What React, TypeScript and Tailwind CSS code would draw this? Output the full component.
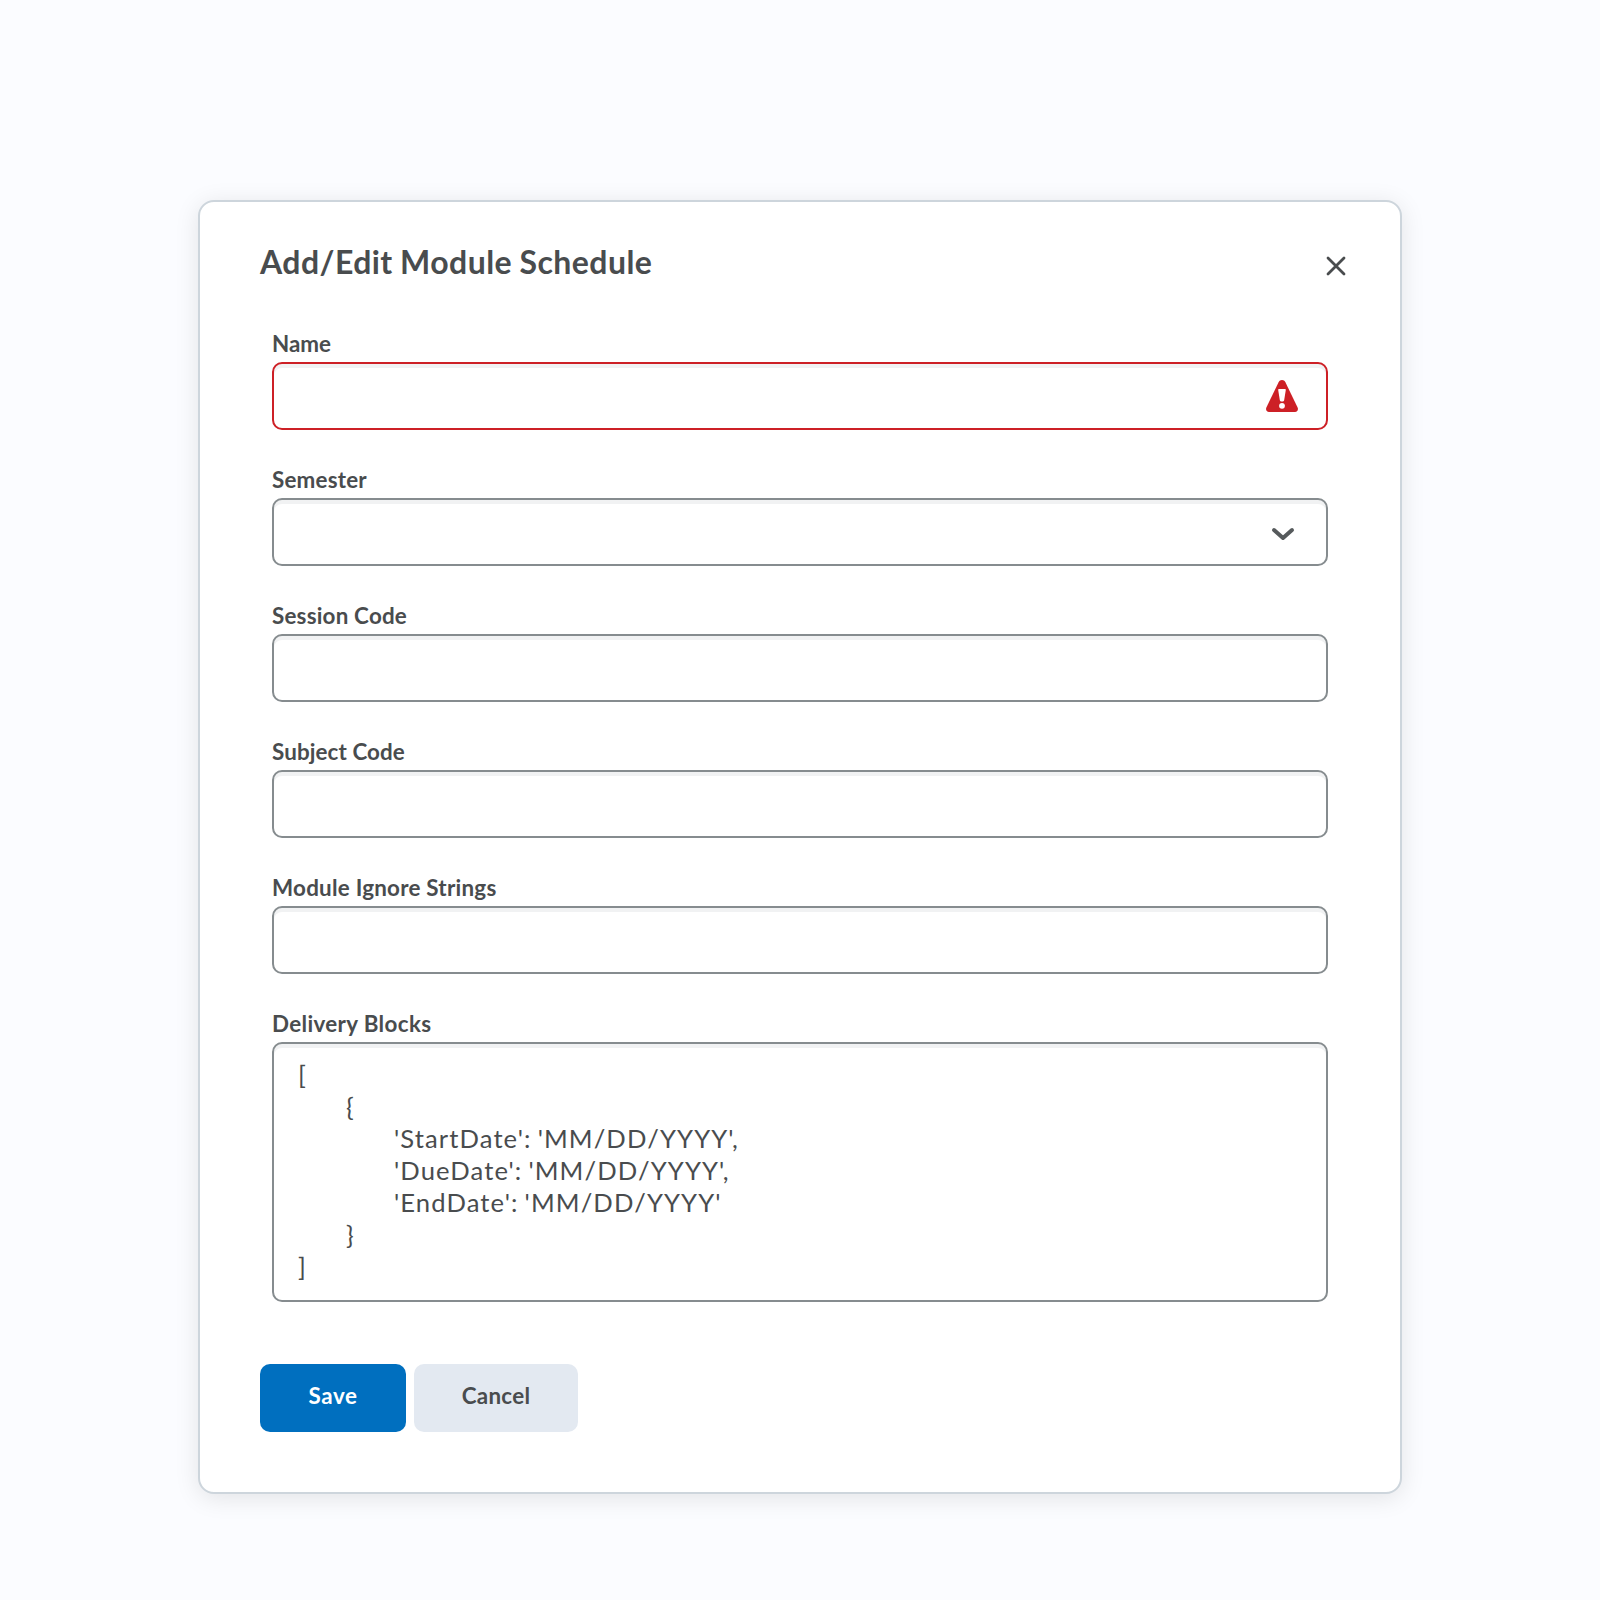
import type { ReactNode } from "react";

const box =
  "w-full rounded-[10px] border-2 bg-white shadow-[inset_0_4px_0_0_#f1f2f3]";

const labelBase = "h-7 text-[22.4px] leading-7 font-bold";

type FieldProps = { label: string; tracking?: string; invalid?: boolean; children?: ReactNode };

function Field({ label, tracking = "tracking-[0.2px]", invalid, children }: FieldProps) {
  return (
    <div className="flex flex-col gap-1">
      <label className={`${labelBase} ${tracking}`}>{label}</label>
      <div
        className={`${box} flex h-[68px] items-center justify-end pr-7 ${invalid ? "border-[#cd2026]" : "border-[#868c8f]"}`}
      >
        {children}
      </div>
    </div>
  );
}

function AlertIcon() {
  return (
    <svg width="32" height="32" viewBox="0 0 32 32" fill="none">
      <path
        d="M16 0c1.5 0 2.7.9 3.4 2.2L31.6 27.4C32.6 29.6 31.4 32 29 32H3C.6 32-.6 29.6.4 27.4L12.6 2.2C13.3.9 14.500 0 16 0Z"
        fill="#cd2026"
      />
      <path d="M13.100 9h5.800c.6 0 1 .5.9 1.100l-1.600 10c-.1.800-.6 1.300-1.200 1.300h-2c-.6 0-1.100-.5-1.200-1.300l-1.600-10c-.1-.6.300-1.100.9-1.100Z" fill="#fff" />
      <circle cx="16" cy="25.800" r="2.900" fill="#fff" />
    </svg>
  );
}

function ChevronIcon() {
  return (
    <svg width="24" height="16" viewBox="0 0 24 16" fill="none" className="mr-[3px] mt-1">
      <path d="M3 4l9 8 9-8" stroke="#565a5c" strokeWidth="4" strokeLinecap="round" strokeLinejoin="round" />
    </svg>
  );
}

const blocks = `[
\t{
\t\t'StartDate': 'MM/DD/YYYY',
\t\t'DueDate': 'MM/DD/YYYY',
\t\t'EndDate': 'MM/DD/YYYY'
\t}
]`;

export default function App() {
  return (
    <div className="flex min-h-[1600px] w-full items-start justify-center bg-[#fbfcff] pt-[200px] font-['Lato',sans-serif] text-[#494c4e]">
      <div className="h-[1294px] w-[1204px] rounded-2xl border-2 border-[#cdd5dc] bg-white px-[60px] pt-10 shadow-[0_4px_24px_rgba(0,0,0,0.1)]">
        <header className="flex h-10 items-center justify-between">
          <h2 className="text-[32px] leading-10 font-bold tracking-[0.44px] [word-spacing:-0.8px]">Add/Edit Module Schedule</h2>
          <button aria-label="Close" className="-mr-2 mt-2">
            <svg width="24" height="24" viewBox="0 0 24 24" fill="none" className="block">
              <path d="M4 4l16 16M20 4L4 20" stroke="#494c4e" strokeWidth="2.800" strokeLinecap="round" />
            </svg>
          </button>
        </header>

        <div className="mt-12 flex flex-col gap-9 px-3">
          <Field label="Name" tracking="tracking-[0px]" invalid>
            <AlertIcon />
          </Field>
          <Field label="Semester">
            <ChevronIcon />
          </Field>
          <Field label="Session Code" />
          <Field label="Subject Code" tracking="tracking-[0.1px]" />
          <Field label="Module Ignore Strings" tracking="tracking-[0.24px]" />
          <div className="flex flex-col gap-1">
            <label className={`${labelBase} tracking-[0.35px]`}>Delivery Blocks</label>
            <pre
              className={`${box} h-[260px] border-[#868c8f] px-6 pt-3.5 font-['Lato',sans-serif] text-[25.6px] leading-8 tracking-[1.1px] [tab-size:48px] [word-spacing:-1.6px]`}
            >
              {blocks}
            </pre>
          </div>
        </div>

        <div className="mt-[62px] flex gap-2 text-[22.4px] font-bold">
          <button className="h-[68px] w-[146px] rounded-[10px] bg-[#006fbf] pb-1 tracking-[0.6px] text-white">Save</button>
          <button className="h-[68px] w-[164px] rounded-[10px] bg-[#e3e9f1] pb-1 tracking-[0.3px]">Cancel</button>
        </div>
      </div>
    </div>
  );
}
